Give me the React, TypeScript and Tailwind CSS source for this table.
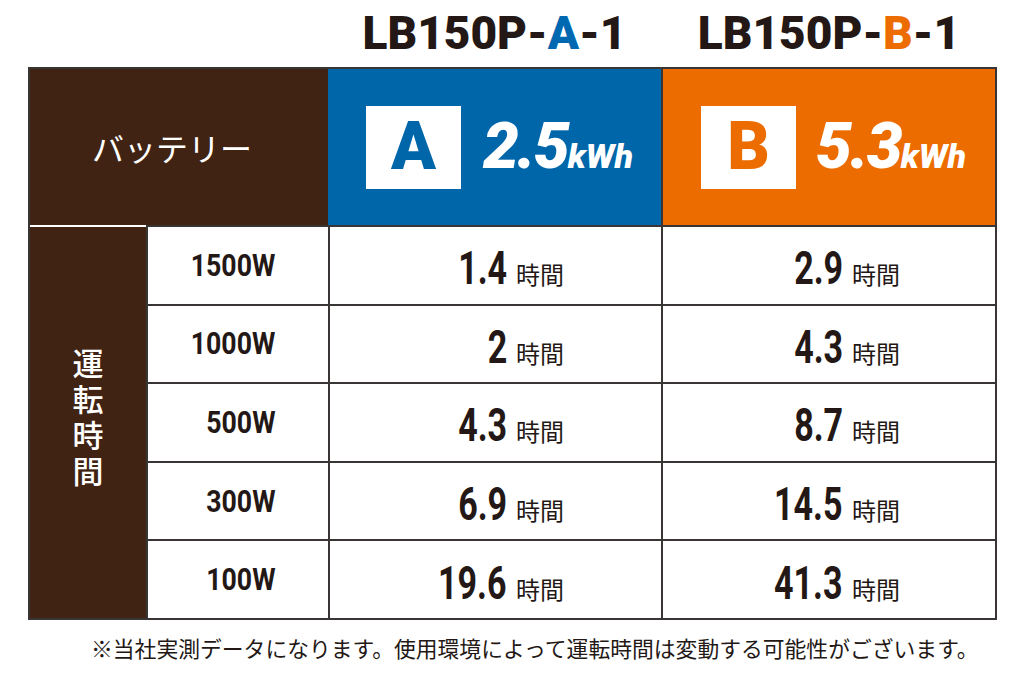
import React from "react";

const rows = [
  { w: "1500W", a: "1.4", b: "2.9" },
  { w: "1000W", a: "2", b: "4.3" },
  { w: "500W", a: "4.3", b: "8.7" },
  { w: "300W", a: "6.9", b: "14.5" },
  { w: "100W", a: "19.6", b: "41.3" },
];

const latin = "font-['Roboto','Liberation_Sans',sans-serif]";
const jp = "font-['Noto_Sans_CJK_JP','Noto_Sans',sans-serif]";

function Val({ v, w }: { v: string; w: string }) {
  return (
    <div className="flex items-baseline">
      <div className={`${w} text-right`}>
        <span
          className={`${latin} inline-block origin-right scale-x-[0.74] text-[46px] font-bold leading-none text-[#231815]`}
        >
          {v}
        </span>
      </div>
      <span className={`${jp} ml-[9px] text-[24px] leading-none text-[#231815]`}>時間</span>
    </div>
  );
}

export default function App() {
  return (
    <div className="w-[1024px] h-[680px] bg-white overflow-hidden">
      {/* titles */}
      <div className="flex h-[67px] items-center pb-[2px]">
        <div className="w-[328px]" />
        <div className={`${latin} w-[333px] text-center text-[46px] font-black leading-none text-[#231815]`}>
          LB150P-<span className="text-[#0068b0]">A</span>-1
        </div>
        <div className={`${latin} w-[336px] text-center text-[46px] font-black leading-none text-[#231815]`}>
          LB150P-<span className="text-[#ec6c00]">B</span>-1
        </div>
      </div>

      {/* table */}
      <div className="ml-[28px] w-[969px] border-2 border-[#3a3535]">
        {/* header */}
        <div className="flex h-[156px]">
          <div className="flex w-[298px] items-center justify-center bg-[#412314] pr-[14px]">
            <span className={`${jp} text-[32px] font-normal leading-none text-white`}>バッテリー</span>
          </div>
          <div className="flex w-[333px] items-center bg-[#0066aa] pl-[38px]">
            <div className="flex h-[83px] w-[95px] items-center justify-center bg-white">
              <span className={`${latin} text-[66px] font-black leading-none text-[#0066aa]`}>A</span>
            </div>
            <div className={`${latin} ml-[22px] flex items-baseline italic font-black text-white`}>
              <span className="text-[64px] leading-none tracking-[-2px]">2.5</span>
              <span className="text-[34px] leading-none">kWh</span>
            </div>
          </div>
          <div className="flex flex-1 items-center border-l-2 border-[#3a3535] bg-[#ec6c00] pl-[38px]">
            <div className="flex h-[83px] w-[95px] items-center justify-center bg-white">
              <span className={`${latin} text-[66px] font-black leading-none text-[#ec6c00]`}>B</span>
            </div>
            <div className={`${latin} ml-[20px] flex items-baseline italic font-black text-white`}>
              <span className="text-[64px] leading-none tracking-[-2px]">5.3</span>
              <span className="text-[34px] leading-none">kWh</span>
            </div>
          </div>
        </div>

        {/* body */}
        <div className="flex">
          <div className="flex w-[116px] items-center justify-center border-t-2 border-white bg-[#412314] pb-[4px]">
            <span
              className={`${jp} [writing-mode:vertical-rl] text-[31px] font-medium leading-none tracking-[5px] text-white`}
            >
              運転時間
            </span>
          </div>
          <div className="flex flex-1 flex-col">
            {rows.map((r) => (
              <div key={r.w} className="flex h-[78.6px] border-t-2 border-[#3a3535]">
                <div className="flex w-[182px] items-center justify-end border-l-2 border-[#3a3535] pr-[53px]">
                  <span
                    className={`${latin} inline-block origin-right scale-x-[0.86] text-[31px] font-bold leading-none text-[#231815]`}
                  >
                    {r.w}
                  </span>
                </div>
                <div className="flex w-[333px] items-center border-l-2 border-[#3a3535] pt-[6px]">
                  <Val v={r.a} w="w-[177px]" />
                </div>
                <div className="flex flex-1 items-center border-l-2 border-[#3a3535] pt-[6px]">
                  <Val v={r.b} w="w-[180px]" />
                </div>
              </div>
            ))}
          </div>
        </div>
      </div>

      {/* footnote */}
      <div className={`${jp} mt-[17px] pl-[91px] text-[21.8px] leading-none text-[#231815] whitespace-nowrap`}>
        ※当社実測データになります。使用環境によって運転時間は変動する可能性がございます。
      </div>
    </div>
  );
}
